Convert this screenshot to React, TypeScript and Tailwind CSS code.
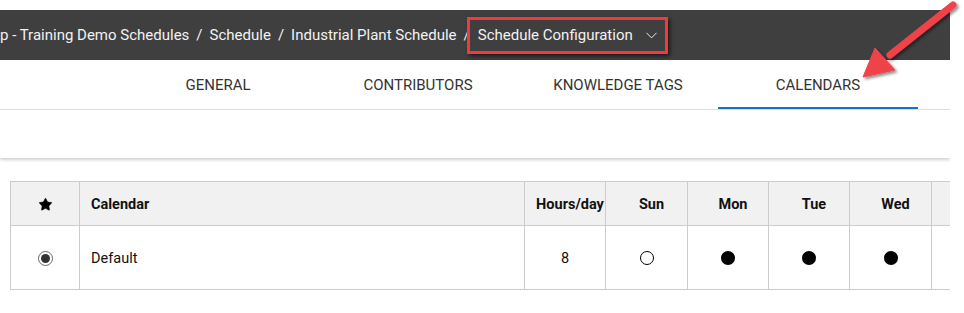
import { ChevronDown, Star } from "lucide-react";

const tabs = ["GENERAL", "CONTRIBUTORS", "KNOWLEDGE TAGS", "CALENDARS"];
const days = [
  { label: "Sun", on: false },
  { label: "Mon", on: true },
  { label: "Tue", on: true },
  { label: "Wed", on: true },
  { label: "Thu", on: true },
];
const colWidths = [69, 445, 81, 82, 81, 81, 82, 81];

function Sep() {
  return <span className="px-[7px]">/</span>;
}

export default function App() {
  return (
    <div
      className="relative w-[964px] h-[313px] bg-white overflow-hidden"
      style={{ fontFamily: "Roboto, 'Liberation Sans', sans-serif" }}
    >
      <div className="w-[950px] overflow-hidden">
        <div className="h-[10px]" />

        {/* Breadcrumb bar */}
        <div className="h-[50px] bg-[#3f3f3f] flex items-center text-[15px] text-[#f2f2f2] whitespace-nowrap">
          <span>p - Training Demo Schedules</span>
          <Sep />
          <span>Schedule</span>
          <Sep />
          <span>Industrial Plant Schedule</span>
          <span className="pl-[7px]">/</span>
          <span className="relative -ml-[3px] h-[37px] w-[201px] border-[3px] border-[#ef3a40] bg-[#3f3f3f] shadow-[2px_2px_4px_rgba(0,0,0,0.6)] flex items-center pl-[8px] gap-[9px]">
            <span>Schedule Configuration</span>
            <ChevronDown className="w-[19px] h-[19px]" strokeWidth={1.2} />
          </span>
        </div>

        {/* Tabs */}
        <div className="h-[50px] flex border-b border-[#e0e0e0] pl-[118px] text-[15px] text-[#333]">
          {tabs.map((t) => (
            <div
              key={t}
              className={
                "w-[200px] flex items-center justify-center pt-[4px] border-b-[2px] " +
                (t === "CALENDARS" ? "border-[#1a6fd1]" : "border-transparent")
              }
            >
              {t}
            </div>
          ))}
        </div>

        {/* Card bottom with shadow */}
        <div className="h-[48px] bg-white shadow-[0_2px_3px_rgba(0,0,0,0.18)]" />

        {/* Calendars table */}
        <div className="pt-[23px] pl-[10px]">
          <table className="w-[1002px] border-collapse text-[14.5px] text-[#111] table-fixed">
            <colgroup>
              {colWidths.map((w, i) => (
                <col key={i} style={{ width: w }} />
              ))}
            </colgroup>
            <thead>
              <tr className="h-[44px] bg-[#f1f1f1]">
                <th className="border border-[#cccccc] p-0">
                  <div className="flex justify-center pt-[1px]">
                    <Star className="w-[15px] h-[15px]" fill="#000" strokeWidth={1} />
                  </div>
                </th>
                <th className="border border-[#cccccc] text-left pl-[11px] pt-[2px] font-bold">Calendar</th>
                <th className="border border-[#cccccc] text-center font-bold whitespace-nowrap pl-[10px] pr-0 pt-[2px] pb-0">
                  Hours/day
                </th>
                {days.map((d) => (
                  <th key={d.label} className="border border-[#cccccc] text-center font-bold pl-[10px] pr-0 pt-[2px] pb-0">
                    {d.label}
                  </th>
                ))}
              </tr>
            </thead>
            <tbody>
              <tr className="h-[64px]">
                <td className="border border-[#cccccc] p-0">
                  <div className="flex justify-center pt-[1px]">
                    <span className="w-[15px] h-[15px] rounded-full border-[1.5px] border-[#666] flex items-center justify-center">
                      <span className="w-[9px] h-[9px] rounded-full bg-[#333]" />
                    </span>
                  </div>
                </td>
                <td className="border border-[#cccccc] pl-[11px] pt-[2px]">Default</td>
                <td className="border border-[#cccccc] text-center pt-[2px]">8</td>
                {days.map((d) => (
                  <td key={d.label} className="border border-[#cccccc] p-0">
                    <div className="flex justify-center pt-[1px]">
                      {d.on ? (
                        <span className="w-[14px] h-[14px] rounded-full bg-black" />
                      ) : (
                        <span className="w-[14px] h-[14px] rounded-full border-[1.5px] border-black bg-white" />
                      )}
                    </div>
                  </td>
                ))}
              </tr>
            </tbody>
          </table>
        </div>
      </div>

      {/* Annotation arrow */}
      <svg
        className="absolute left-[850px] top-0 w-[114px] h-[90px] pointer-events-none"
        viewBox="0 0 114 90"
      >
        <defs>
          <filter id="sh" x="-20%" y="-20%" width="140%" height="140%">
            <feDropShadow dx="2" dy="2" stdDeviation="1.5" floodColor="#000" floodOpacity="0.45" />
          </filter>
        </defs>
        <g filter="url(#sh)" fill="#f0434a" stroke="#f0434a">
          <line x1="103" y1="5" x2="40" y2="55" strokeWidth="7" strokeLinecap="round" />
          <polygon points="13,77 25,48 45,70" strokeWidth="1" strokeLinejoin="round" />
        </g>
      </svg>
    </div>
  );
}
